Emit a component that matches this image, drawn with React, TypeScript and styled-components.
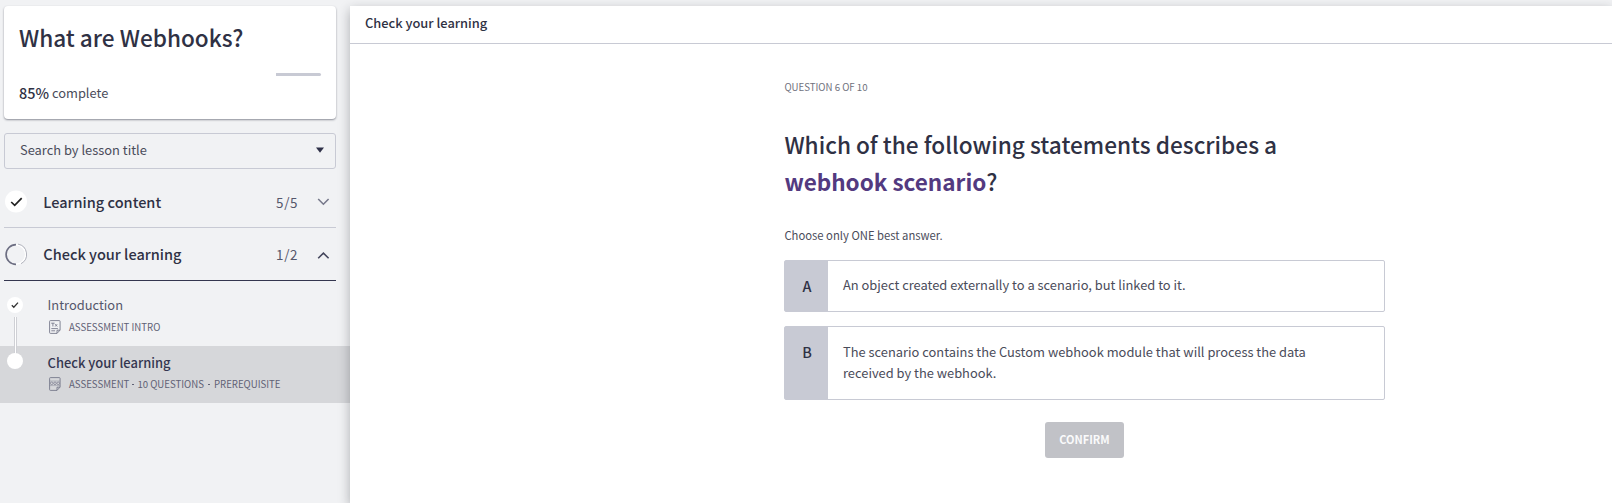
import React from "react";
import styled, { createGlobalStyle } from "styled-components";

const Global = createGlobalStyle`
  * { box-sizing: border-box; }
  body {
    margin: 0;
    background: #f1f2f4;
    color: #2f3144;
    font-family: "Noto Sans CJK SC", "Noto Sans", sans-serif;
    overflow: hidden;
  }
  h1, h2, p { margin: 0; }
  svg { display: block; flex: none; }
`;

const Page = styled.div`
  display: flex;
  height: 503px;
  overflow: hidden;
`;

const Sidebar = styled.aside`
  width: 350px;
  flex: none;
  padding-top: 6px;
`;

const ProgressCard = styled.section`
  width: 332px;
  height: 113px;
  margin-left: 4px;
  padding: 16px 15px 0;
  border-radius: 4px;
  background: #fff;
  box-shadow: 0 1px 2px rgba(40, 42, 60, 0.5);
`;

const CourseTitle = styled.h1`
  font-size: 22.6px;
  line-height: 31px;
  font-weight: 500;
`;

const Track = styled.div`
  display: flex;
  justify-content: flex-end;
  height: 3px;
  margin: 20px 0 7px;
`;

const Remaining = styled.div`
  width: 15%;
  border-radius: 0 2px 2px 0;
  background: #c8cad4;
`;

const Complete = styled.p`
  display: flex;
  gap: 3px;
  font-size: 12.85px;
  line-height: 20px;
  color: #4a4c5a;
`;

const Percent = styled.span`
  font-size: 14.43px;
  font-weight: 500;
  color: #2f3144;
`;

const SearchBox = styled.div`
  display: flex;
  align-items: center;
  justify-content: space-between;
  width: 332px;
  height: 36px;
  margin: 14px 0 0 4px;
  padding: 0 11px 2px 15px;
  border: 1px solid #c8cad4;
  border-radius: 3px;
  font-size: 12.89px;
  line-height: 20px;
  color: #4a4c5a;
`;

const Section = styled.div<{ $open?: boolean }>`
  display: flex;
  align-items: center;
  width: 332px;
  height: ${(p) => (p.$open ? 53 : 59)}px;
  margin-left: 4px;
  padding: ${(p) => (p.$open ? "0 6px 0 1px" : "7px 6px 0 1px")};
  border-bottom: 1px solid ${(p) => (p.$open ? "#34364f" : "#c8cad4")};
`;

const SectionTitle = styled.h2`
  flex: 1;
  margin-left: 15.3px;
  font-size: 14.54px;
  line-height: 22px;
  font-weight: 500;
`;

const Count = styled.span`
  width: 41px;
  font-size: 13.4px;
  line-height: 22px;
  letter-spacing: 0.7px;
  color: #55576b;
`;

const Lesson = styled.div<{ $active?: boolean }>`
  display: flex;
  height: ${(p) => (p.$active ? 57 : 65)}px;
  padding: ${(p) => (p.$active ? "7px 0 0 7px" : "14px 0 0 7px")};
  background: ${(p) => (p.$active ? "#d6d7da" : "transparent")};
`;

const Rail = styled.div`
  display: flex;
  flex-direction: column;
  align-items: center;
  width: 17px;
  margin-right: 23.6px;
`;

const Dot = styled.div`
  display: flex;
  align-items: center;
  justify-content: center;
  flex: none;
  width: 16px;
  height: 16px;
  margin: 2px 0.5px 0 0;
  border-radius: 50%;
  background: #fff;
`;

const Connector = styled.div`
  width: 3px;
  height: 37px;
  flex: none;
  margin: 4px 1px 0 0;
  border: solid #cfd0d5;
  border-width: 0 1px;
  background: #fff;
`;

const ActiveDot = styled(Dot)`
  margin-top: 0;
`;

const LessonTitle = styled.p<{ $active?: boolean }>`
  font-size: ${(p) => (p.$active ? 12.95 : 12.88)}px;
  font-weight: ${(p) => (p.$active ? 500 : 400)};
  line-height: 20px;
  color: ${(p) => (p.$active ? "#34364f" : "#55576b")};
`;

const Meta = styled.p<{ $active?: boolean }>`
  display: flex;
  align-items: center;
  height: 16px;
  margin-top: ${(p) => (p.$active ? 3 : 4)}px;
  padding-left: 1px;
  font-size: 9.65px;
  line-height: 16px;
  color: #5f6175;
  svg { margin-right: 8.4px; }
`;

const Separator = styled.span`
  width: 2px;
  height: 1px;
  margin: 0 3px;
  background: #5f6175;
`;

const WideSeparator = styled(Separator)`
  margin: 0 4px;
`;

const Main = styled.main`
  flex: 1;
  margin-top: 6px;
  background: #fff;
  box-shadow: 0 4px 11px rgba(30, 32, 40, 0.33);
`;

const TopBar = styled.header`
  height: 38px;
  padding: 6px 15px 0;
  border-bottom: 1px solid #c8cad4;
  font-size: 12.87px;
  line-height: 21px;
  font-weight: 500;
`;

const Quiz = styled.section`
  display: flex;
  flex-direction: column;
  width: 601px;
  margin-left: 434px;
  padding-top: 35px;
`;

const Position = styled.p`
  padding-left: 0.4px;
  font-size: 9.66px;
  line-height: 16px;
  color: #6f717d;
`;

const Question = styled.h1`
  margin-top: 31px;
  padding-left: 0.4px;
  font-size: 22.64px;
  line-height: 37px;
  font-weight: 500;
`;

const Term = styled.strong`
  font-size: 22.5px;
  font-weight: 700;
  color: #533a80;
`;

const Hint = styled.p`
  margin-top: 25px;
  padding-left: 0.4px;
  font-size: 11.27px;
  line-height: 20px;
  color: #4a4c5a;
`;

const Option = styled.div<{ $lines: number }>`
  display: flex;
  height: ${(p) => (p.$lines > 1 ? 74 : 52)}px;
  margin-bottom: 14px;
  border: 1px solid #c8cad4;
  border-radius: 2px;
`;

const Letter = styled.div<{ $lines: number }>`
  width: 43px;
  flex: none;
  padding: ${(p) => (p.$lines > 1 ? 14 : 14)}px 0 0 1px;
  background: #c8cad4;
  text-align: center;
  font-size: 14.4px;
  line-height: 21px;
  font-weight: 500;
`;

const OptionText = styled.p<{ $lines: number }>`
  padding: ${(p) => (p.$lines > 1 ? 14 : 13)}px 0 0 15px;
  font-size: 12.89px;
  line-height: 21px;
  color: #4a4c5a;
`;

const Options = styled.div`
  margin-top: 15px;
`;

const Confirm = styled.button`
  align-self: center;
  width: 79px;
  height: 36px;
  margin-top: 8px;
  padding: 0 0 2px;
  border: 0;
  border-radius: 3px;
  background: #c1c2c7;
  color: #fafafb;
  font: 700 11px/20px "Noto Sans CJK SC", "Noto Sans", sans-serif;
`;

const DoneIcon = () => (
  <svg width="23" height="23" viewBox="0 0 23 23" fill="none">
    <circle cx="11" cy="11.5" r="11" fill="#fff" />
    <path d="M6.2 12l3.5 3.3 7-7.2" stroke="#222" strokeWidth="1.7" />
  </svg>
);

const PartialIcon = () => (
  <svg width="23" height="23" viewBox="0 0 23 23" fill="none">
    <circle cx="11" cy="11.5" r="9.6" stroke="#fff" strokeWidth="1.4" />
    <path d="M13 1.1A10.5 10.5 0 0 1 16 20.7" stroke="#a9abb6" strokeWidth="0.9" />
    <path d="M11 1.6a9.9 9.9 0 0 0 0 19.8" stroke="#6c6e82" strokeWidth="1.7" />
  </svg>
);

const Chevron = ({ up }: { up?: boolean }) => (
  <svg width="13" height="13" viewBox="0 0 13 13" fill="none">
    <path
      d={up ? "M1.2 10.3l5.2-5.2 5.2 5.2" : "M1.2 4l5.2 5.2L11.6 4"}
      stroke={up ? "#44465c" : "#77798b"}
      strokeWidth="1.6"
    />
  </svg>
);

const Caret = () => (
  <svg width="8" height="6" viewBox="0 0 8 6">
    <path d="M0 0.5h8L4 5.8z" fill="#2f3148" />
  </svg>
);

const SmallCheck = () => (
  <svg width="8" height="8" viewBox="0 0 8 8" fill="none">
    <path d="M0.8 4.2l2 2 4.2-4.6" stroke="#333" strokeWidth="1.3" />
  </svg>
);

const DocIcon = ({ quiz }: { quiz?: boolean }) => (
  <svg width="12" height="14" viewBox="0 0 12 14" fill="none" stroke="#77798b" strokeWidth="0.9">
    <path d="M0.6 1.4q0-.8.8-.8h8.9q.8 0 .8.8v8.7L8 13.4H1.4q-.8 0-.8-.8z" />
    <path d="M11 10.2H8v3.1" />
    {quiz ? (
      <>
        <path d="M0.6 4h10.5M0.6 8.6h10.5" strokeWidth="0.4" />
        <circle cx="2.7" cy="6.3" r="1.3" strokeWidth="0.7" />
        <circle cx="6" cy="6.3" r="1.3" strokeWidth="0.7" />
        <circle cx="9.2" cy="6.3" r="1.3" strokeWidth="0.7" />
      </>
    ) : (
      <path d="M2.2 3.2h3.4M3.9 3.2v3.3M6.2 4.2l2 2.3M8.2 4.2l-2 2.3M2.3 8.6h6.6M2.3 10.8h3.8" />
    )}
  </svg>
);

export default function App() {
  return (
    <>
      <Global />
      <Page>
        <Sidebar>
          <ProgressCard>
            <CourseTitle>What are Webhooks?</CourseTitle>
            <Track>
              <Remaining />
            </Track>
            <Complete>
              <Percent>85%</Percent>
              <span>complete</span>
            </Complete>
          </ProgressCard>
          <SearchBox>
            <span>Search by lesson title</span>
            <Caret />
          </SearchBox>
          <Section>
            <DoneIcon />
            <SectionTitle>Learning content</SectionTitle>
            <Count>5/5</Count>
            <Chevron />
          </Section>
          <Section $open>
            <PartialIcon />
            <SectionTitle>Check your learning</SectionTitle>
            <Count>1/2</Count>
            <Chevron up />
          </Section>
          <Lesson>
            <Rail>
              <Dot>
                <SmallCheck />
              </Dot>
              <Connector />
            </Rail>
            <div>
              <LessonTitle>Introduction</LessonTitle>
              <Meta>
                <DocIcon />
                ASSESSMENT INTRO
              </Meta>
            </div>
          </Lesson>
          <Lesson $active>
            <Rail>
              <ActiveDot />
            </Rail>
            <div>
              <LessonTitle $active>Check your learning</LessonTitle>
              <Meta $active>
                <DocIcon quiz />
                <span>ASSESSMENT</span>
                <Separator />
                <span>10 QUESTIONS</span>
                <WideSeparator />
                <span>PREREQUISITE</span>
              </Meta>
            </div>
          </Lesson>
        </Sidebar>
        <Main>
          <TopBar>Check your learning</TopBar>
          <Quiz>
            <Position>QUESTION 6 OF 10</Position>
            <Question>
              Which of the following statements describes a<br />
              <Term>webhook scenario</Term>?
            </Question>
            <Hint>Choose only ONE best answer.</Hint>
            <Options>
              <Option $lines={1}>
                <Letter $lines={1}>A</Letter>
                <OptionText $lines={1}>
                  An object created externally to a scenario, but linked to it.
                </OptionText>
              </Option>
              <Option $lines={2}>
                <Letter $lines={2}>B</Letter>
                <OptionText $lines={2}>
                  The scenario contains the Custom webhook module that will process the data
                  <br />
                  received by the webhook.
                </OptionText>
              </Option>
            </Options>
            <Confirm>CONFIRM</Confirm>
          </Quiz>
        </Main>
      </Page>
    </>
  );
}
